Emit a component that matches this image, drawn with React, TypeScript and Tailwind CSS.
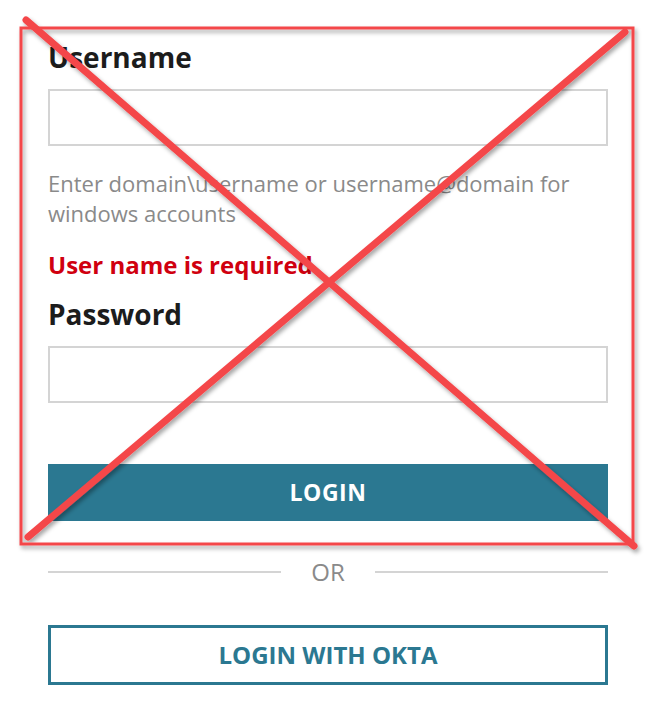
import React from 'react';

const font = { fontFamily: '"Open Sans", "Liberation Sans", sans-serif' };

function Field({ label, children }: { label: string; children?: React.ReactNode }) {
    return (
        <div>
            <label className="block text-[28px] leading-[36px] font-bold text-[#1c1c1c]">{label}</label>
            <input className="mt-[14px] block w-full h-[57px] border-2 border-[#d4d4d4] bg-white outline-none px-3 text-lg" />
            {children}
        </div>
    );
}

export default function App() {
    return (
        <div className="relative w-[657px] h-[725px] bg-white overflow-hidden" style={font}>
            <div className="w-[560px] ml-[48px] pt-[39px]">
                <Field label="Username">
                    <p className="mt-[22px] text-[22px] leading-[30px] text-[#8a8a8a]">
                        Enter domain\username or username@domain for windows accounts
                    </p>
                    <p className="mt-[22px] text-[24px] leading-[30px] font-bold text-[#d0000f]">User name is required</p>
                </Field>
                <div className="mt-[16px]">
                    <Field label="Password" />
                </div>
                <button className="mt-[61px] w-full h-[57px] bg-[#2b7891] text-white text-[23px] font-bold tracking-[0.5px]">
                    LOGIN
                </button>
                <div className="mt-[36px] flex items-center gap-[30px] h-[30px]">
                    <div className="flex-1 h-[2px] bg-[#d4d4d4]" />
                    <span className="text-[24px] leading-[30px] text-[#8a8a8a]">OR</span>
                    <div className="flex-1 h-[2px] bg-[#d4d4d4]" />
                </div>
                <button className="mt-[38px] w-full h-[60px] border-[3px] border-[#2b7891] bg-white text-[#2b7891] text-[24px] font-bold">
                    LOGIN WITH OKTA
                </button>
            </div>

            {/* annotation overlay */}
            <svg className="absolute inset-0 pointer-events-none" width="657" height="725" viewBox="0 0 657 725">
                <defs>
                    <filter id="sh" x="-10%" y="-10%" width="120%" height="120%">
                        <feDropShadow dx="2" dy="3" stdDeviation="2" floodColor="#000" floodOpacity="0.35" />
                    </filter>
                </defs>
                <g filter="url(#sh)">
                    <rect x="21" y="28" width="612" height="516" fill="none" stroke="#f4474a" strokeWidth="3" />
                    <line x1="26" y1="20" x2="634" y2="546" stroke="#f4474a" strokeWidth="7" strokeLinecap="round" />
                    <line x1="625" y1="32" x2="28" y2="537" stroke="#f4474a" strokeWidth="7" strokeLinecap="round" />
                </g>
            </svg>
        </div>
    );
}
